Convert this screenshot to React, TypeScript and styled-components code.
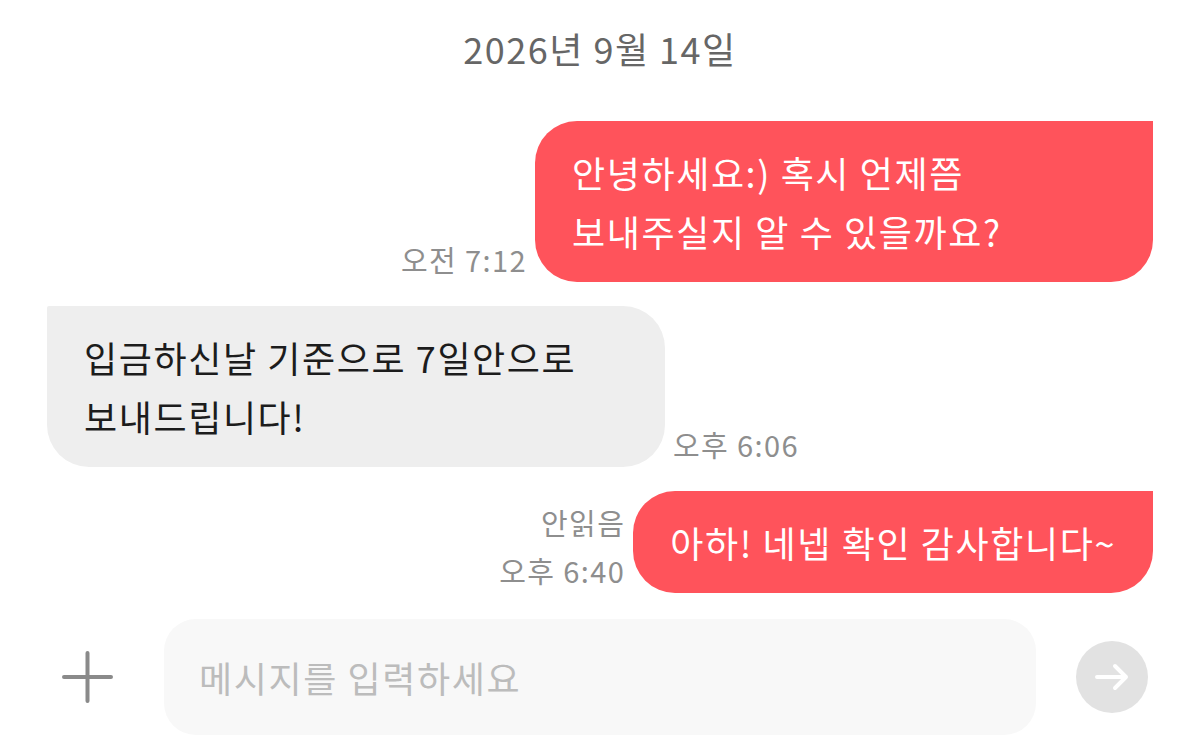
import React from "react";
import styled, { createGlobalStyle } from "styled-components";

const GlobalStyle = createGlobalStyle`
  html, body {
    margin: 0;
    padding: 0;
    background: #ffffff;
  }
  body {
    font-family: "Noto Sans CJK KR", "Noto Sans", sans-serif;
  }
  * { box-sizing: border-box; }
`;

const Screen = styled.div`
  width: 1200px;
  height: 746px;
  display: flex;
  flex-direction: column;
  background: #ffffff;
  overflow: hidden;
`;

const DateLabel = styled.div`
  text-align: center;
  color: #666666;
  font-size: 36px;
  line-height: 50px;
  padding-top: 23px;
  letter-spacing: 1.5px;
`;

const Thread = styled.div`
  flex: 1;
  display: flex;
  flex-direction: column;
  gap: 24px;
  padding: 48px 47px 0;
`;

const Row = styled.div<{ $mine: boolean }>`
  display: flex;
  flex-direction: ${(p) => (p.$mine ? "row-reverse" : "row")};
  align-items: flex-end;
  gap: 8px;
`;

const Bubble = styled.div<{ $mine: boolean }>`
  max-width: 618px;
  padding: 21.5px 37px;
  font-size: 36px;
  line-height: 59px;
  letter-spacing: 1.6px;
  word-break: keep-all;
  background: ${(p) => (p.$mine ? "#ff535b" : "#eeeeee")};
  color: ${(p) => (p.$mine ? "#ffffff" : "#1c1c1c")};
  border-radius: ${(p) => (p.$mine ? "42px 0 42px 42px" : "2px 42px 42px 42px")};
`;

const Meta = styled.div<{ $mine: boolean }>`
  display: flex;
  flex-direction: column;
  align-items: ${(p) => (p.$mine ? "flex-end" : "flex-start")};
  gap: 10px;
  padding-bottom: 4px;
  color: #8e8e8e;
  font-size: 29px;
  line-height: 38px;
  letter-spacing: 1.4px;
  white-space: nowrap;
`;

const InputBar = styled.div`
  display: flex;
  align-items: center;
  padding: 0 52px 11px 62px;
`;

const IconButton = styled.button`
  width: 51px;
  height: 52px;
  padding: 0;
  border: none;
  background: transparent;
  display: flex;
  align-items: center;
  justify-content: center;
  flex-shrink: 0;
`;

const Field = styled.div`
  flex: 1;
  height: 116px;
  margin: 0 40px 0 51px;
  background: #f8f8f8;
  border-radius: 32px;
  display: flex;
  align-items: center;
  padding: 0 35px;
  color: #bcbcbc;
  font-size: 36px;
  letter-spacing: 1.6px;
`;

const SendButton = styled.button`
  width: 72px;
  height: 72px;
  border-radius: 50%;
  border: none;
  padding: 0;
  background: #e2e2e2;
  display: flex;
  align-items: center;
  justify-content: center;
  flex-shrink: 0;
`;

type Message = {
  mine: boolean;
  text: string;
  meta: string[];
};

const messages: Message[] = [
  { mine: true, text: "안녕하세요:) 혹시 언제쯤 보내주실지 알 수 있을까요?", meta: ["오전 7:12"] },
  { mine: false, text: "입금하신날 기준으로 7일안으로 보내드립니다!", meta: ["오후 6:06"] },
  { mine: true, text: "아하! 네넵 확인 감사합니다~", meta: ["안읽음", "오후 6:40"] },
];

export default function App() {
  return (
    <>
      <GlobalStyle />
      <Screen>
        <DateLabel>2026년 9월 14일</DateLabel>
        <Thread>
          {messages.map((m, i) => (
            <Row key={i} $mine={m.mine}>
              <Bubble $mine={m.mine}>{m.text}</Bubble>
              <Meta $mine={m.mine}>
                {m.meta.map((t) => (
                  <span key={t}>{t}</span>
                ))}
              </Meta>
            </Row>
          ))}
        </Thread>
        <InputBar>
          <IconButton aria-label="추가">
            <svg width="51" height="52" viewBox="0 0 51 52">
              <path d="M25.5 2 V50 M2 26 H49" stroke="#8a8a8a" strokeWidth="4" strokeLinecap="round" fill="none" />
            </svg>
          </IconButton>
          <Field>메시지를 입력하세요</Field>
          <SendButton aria-label="전송">
            <svg width="36" height="30" viewBox="0 0 36 30">
              <path d="M3 15 H32 M21 4 L32 15 L21 26" stroke="#ffffff" strokeWidth="4" strokeLinecap="round" strokeLinejoin="round" fill="none" />
            </svg>
          </SendButton>
        </InputBar>
      </Screen>
    </>
  );
}
